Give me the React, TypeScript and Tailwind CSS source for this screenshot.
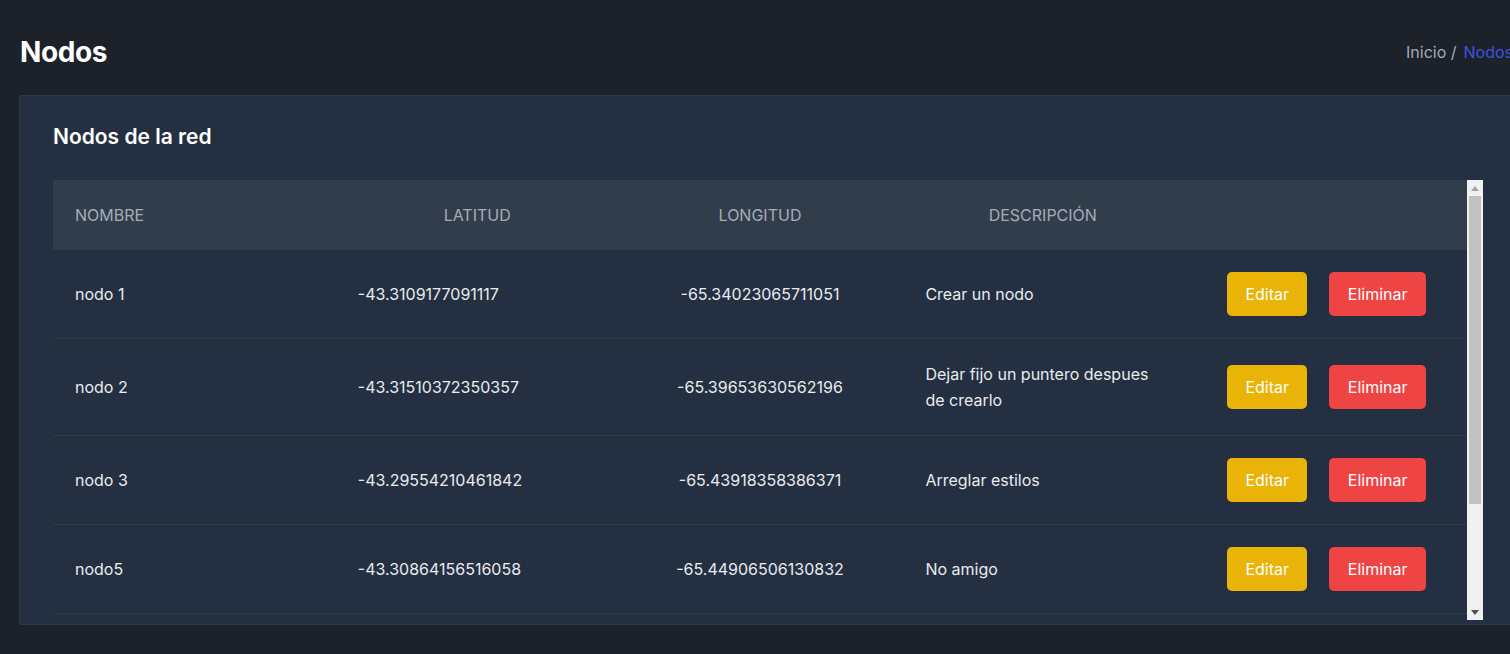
const nodos = [
  { nombre: "nodo 1", lat: "-43.3109177091117", lng: "-65.34023065711051", desc: "Crear un nodo" },
  { nombre: "nodo 2", lat: "-43.31510372350357", lng: "-65.39653630562196", desc: "Dejar fijo un puntero despues de crearlo" },
  { nombre: "nodo 3", lat: "-43.29554210461842", lng: "-65.43918358386371", desc: "Arreglar estilos" },
  { nombre: "nodo5", lat: "-43.30864156516058", lng: "-65.44906506130832", desc: "No amigo" },
  { nombre: "nodo 6", lat: "-43.30112845210367", lng: "-65.41527730144529", desc: "Probar el mapa" },
  { nombre: "nodo 7", lat: "-43.29871203315524", lng: "-65.40263318870412", desc: "Nodo de prueba" },
];

// dibujo de la barra de desplazamiento (estilo clásico)
const ScrollBar = () => (
  <div className="w-[16px] h-full bg-[#f1f1f1] flex flex-col items-center shrink-0">
    <div className="h-[16px] w-full flex items-center justify-center">
      <svg width="8" height="5" viewBox="0 0 8 5"><path d="M4 0L8 5H0z" fill="#a3a3a3" /></svg>
    </div>
    <div className="w-[12px] h-[308px] bg-[#c1c1c1]" />
    <div className="flex-1" />
    <div className="h-[16px] w-full flex items-center justify-center">
      <svg width="8" height="5" viewBox="0 0 8 5"><path d="M0 0H8L4 5z" fill="#505050" /></svg>
    </div>
  </div>
);

const App = () => {
  return (
    <div className="w-full h-[654px] overflow-hidden bg-[#1c212a] font-['Inter','Liberation_Sans',sans-serif]">
      <div className="w-[1538px] px-[19px]">
        <div className="flex items-center justify-between pt-[34px] pb-[25px] pl-px">
          <h1 className="text-[28px] leading-[36px] font-bold text-white tracking-[-0.4px]">Nodos</h1>
          <nav className="flex items-center gap-[7px] text-[16px] pr-[6px]">
            <span className="text-[#a3acb9]">Inicio /</span>
            <span className="text-[#3d55dc]">Nodos</span>
          </nav>
        </div>

        <section className="bg-[#243041] border border-[#2f3a49] rounded-[2px] pt-[27px] pb-[4px] px-[33px]">
          <h2 className="text-[21px] leading-[28px] font-semibold text-white mb-[29px]">Nodos de la red</h2>

          <div className="flex h-[440px] w-[1430px]">
            <div className="w-[1414px] overflow-hidden">
              <table className="w-full table-fixed text-[16px] text-[#e8ebf0]">
                <thead>
                  <tr className="bg-[#323d4c] text-[#a3acb9] uppercase">
                    <th className="h-[70px] px-[22px] text-left font-normal">Nombre</th>
                    <th className="h-[70px] px-[22px] text-center font-normal">Latitud</th>
                    <th className="h-[70px] px-[22px] text-center font-normal">Longitud</th>
                    <th className="h-[70px] px-[22px] text-center font-normal">Descripción</th>
                    <th className="h-[70px] px-[22px]"></th>
                  </tr>
                </thead>
                <tbody>
                  {nodos.map((n) => (
                    <tr key={n.nombre} className="border-b border-[#2f3a4a]">
                      <td className="px-[22px] py-[22px] leading-[26px]">{n.nombre}</td>
                      <td className="px-[22px] py-[22px] leading-[26px]">{n.lat}</td>
                      <td className="px-[22px] py-[22px] leading-[26px] text-center">{n.lng}</td>
                      <td className="px-[24px] py-[22px] leading-[26px]">{n.desc}</td>
                      <td className="pl-[43px] py-[22px]">
                        <div className="flex gap-[22px]">
                          <button className="h-[44px] w-[80px] rounded-[5px] bg-[#eab308] text-white">Editar</button>
                          <button className="h-[44px] w-[97px] rounded-[5px] bg-[#ef4444] text-white">Eliminar</button>
                        </div>
                      </td>
                    </tr>
                  ))}
                </tbody>
              </table>
            </div>
            <ScrollBar />
          </div>
        </section>
      </div>
    </div>
  );
};

export default App;
